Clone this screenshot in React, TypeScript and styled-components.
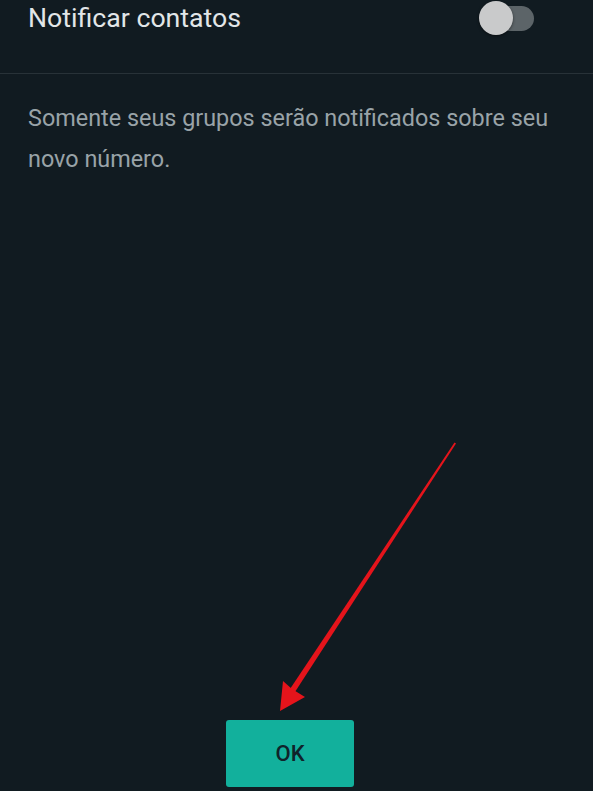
import styled, { createGlobalStyle } from 'styled-components';

const GlobalStyle = createGlobalStyle`
  html, body {
    margin: 0;
    padding: 0;
    background: #111b21;
  }
  body {
    font-family: Roboto, 'Noto Sans', sans-serif;
  }
`;

const Screen = styled.div`
  width: 593px;
  height: 791px;
  background: #111b21;
  display: flex;
  flex-direction: column;
  position: relative;
  overflow: hidden;
`;

const SettingRow = styled.div`
  height: 74px;
  display: flex;
  align-items: flex-start;
  justify-content: space-between;
  padding: 0 59px 0 28px;
  border-bottom: 1px solid #283238;
  box-sizing: border-box;
`;

const SettingLabel = styled.span`
  font-size: 26.7px;
  line-height: 36px;
  color: #e2e6e8;
`;

const Toggle = styled.div`
  position: relative;
  width: 55px;
  height: 36px;
  display: flex;
  align-items: center;
  justify-content: flex-end;
`;

const Track = styled.div`
  width: 44px;
  height: 25px;
  border-radius: 13px;
  background: #5c6468;
`;

const Thumb = styled.div`
  position: absolute;
  left: 0;
  top: 1px;
  width: 34px;
  height: 34px;
  border-radius: 50%;
  background: #c9cacb;
  box-shadow: 0 1px 3px rgba(0, 0, 0, 0.5);
`;

const Note = styled.p`
  margin: 24px 0 0;
  padding: 0 28px;
  font-size: 23.4px;
  line-height: 41px;
  color: #99a3a8;
`;

const Footer = styled.div`
  margin-top: auto;
  display: flex;
  justify-content: center;
  padding-bottom: 4px;
`;

const OkButton = styled.button`
  width: 128px;
  height: 67px;
  margin-left: -13px;
  border: none;
  border-radius: 3px;
  background: #12b09c;
  color: #10232a;
  font-family: Roboto, 'Noto Sans', sans-serif;
  font-size: 22px;
  font-weight: 500;
`;

// red annotation arrow drawn over the screen
const ArrowOverlay = styled.svg`
  position: absolute;
  left: 0;
  top: 0;
  pointer-events: none;
`;

export default function App() {
  return (
    <>
      <GlobalStyle />
      <Screen>
        <SettingRow>
          <SettingLabel>Notificar contatos</SettingLabel>
          <Toggle>
            <Track />
            <Thumb />
          </Toggle>
        </SettingRow>
        <Note>
          Somente seus grupos serão notificados sobre seu
          <br />
          novo número.
        </Note>
        <Footer>
          <OkButton>OK</OkButton>
        </Footer>
        <ArrowOverlay width="593" height="791" viewBox="0 0 593 791">
          <polygon points="454.5,442.5 456,443.5 293,695 288,692" fill="#e5141b" />
          <polygon points="280,711 283,681 292,689 305,697" fill="#e5141b" />
        </ArrowOverlay>
      </Screen>
    </>
  );
}
